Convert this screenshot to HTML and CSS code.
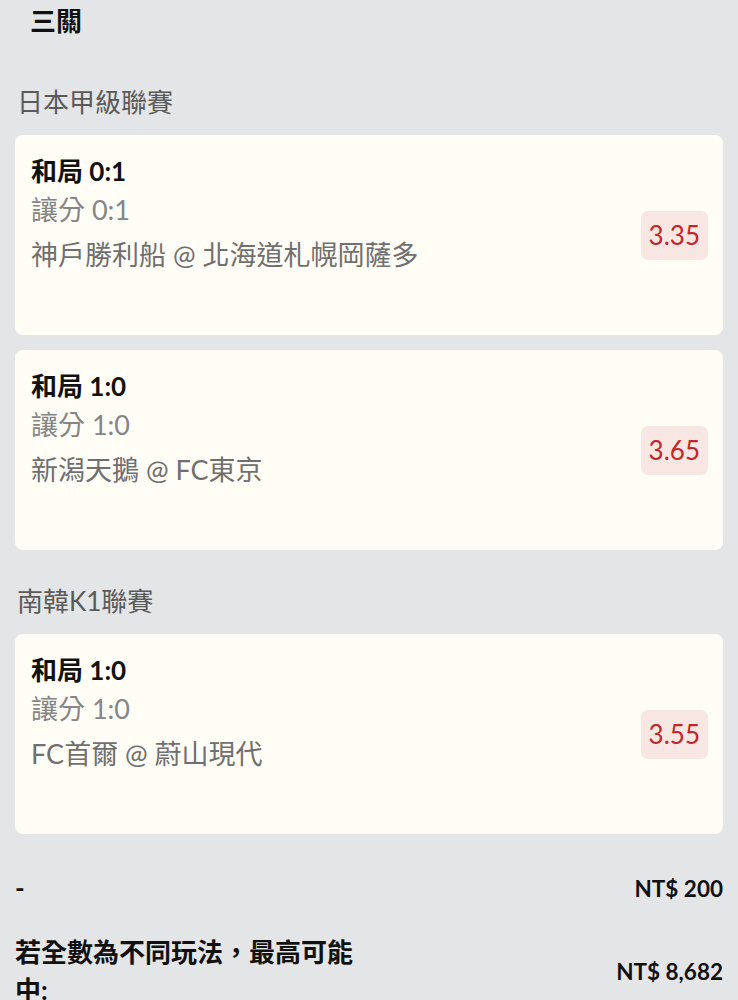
FILE: index.html
```html
<!DOCTYPE html>
<html lang="zh-Hant">
<head>
  <meta charset="UTF-8" />
  <meta name="viewport" content="width=device-width, initial-scale=1.0" />
  <title>三關</title>
  <link rel="stylesheet" href="styles.css">
</head>
<body>
  <h1 class="slip-title">三關</h1>

  <div class="league">日本甲級聯賽</div>

  <div class="bet-card">
    <div class="bet-info">
      <div class="bet-pick">和局 0:1</div>
      <div class="bet-market">讓分 0:1</div>
      <div class="bet-match">神戶勝利船 @ 北海道札幌岡薩多</div>
    </div>
    <div class="odds">3.35</div>
  </div>

  <div class="bet-card">
    <div class="bet-info">
      <div class="bet-pick">和局 1:0</div>
      <div class="bet-market">讓分 1:0</div>
      <div class="bet-match">新潟天鵝 @ FC東京</div>
    </div>
    <div class="odds">3.65</div>
  </div>

  <div class="league">南韓K1聯賽</div>

  <div class="bet-card">
    <div class="bet-info">
      <div class="bet-pick">和局 1:0</div>
      <div class="bet-market">讓分 1:0</div>
      <div class="bet-match">FC首爾 @ 蔚山現代</div>
    </div>
    <div class="odds">3.55</div>
  </div>

  <div class="summary-row stake">
    <div class="summary-label">-</div>
    <div class="summary-value">NT$ 200</div>
  </div>

  <div class="summary-row">
    <div class="summary-label wrap">若全數為不同玩法，最高可能中:</div>
    <div class="summary-value">NT$ 8,682</div>
  </div>
</body>
</html>
```

FILE: styles.css
```css
body {
  margin: 0;
  padding: 0 15px;
  background-color: #e4e5e7;
  font-family: Lato, 'Noto Sans CJK TC', sans-serif;
  color: #111;
}

.slip-title {
  margin: 0 0 47px;
  padding: 4px 15px 0;
  font-size: 26px;
  line-height: 34px;
  font-weight: 700;
}

.league {
  margin: 34px 2px 16px;
  font-size: 26px;
  line-height: 34px;
  color: #5a5a5a;
}

.bet-card {
  display: flex;
  align-items: center;
  justify-content: space-between;
  height: 200px;
  margin-bottom: 15px;
  padding: 0 15px 0 16px;
  box-sizing: border-box;
  background-color: #fffdf6;
  border-radius: 8px;
}

.bet-info {
  align-self: flex-start;
  padding-top: 19px;
}

.bet-pick {
  font-size: 26px;
  line-height: 34px;
  font-weight: 700;
  color: #111;
}

.bet-market {
  margin-top: 4px;
  font-size: 27px;
  line-height: 36px;
  color: #858585;
}

.bet-match {
  margin-top: 9px;
  font-size: 27px;
  line-height: 36px;
  color: #6f6f6f;
}

.odds {
  padding: 8px;
  background-color: #f7e6e1;
  border-radius: 7px;
  font-size: 26px;
  line-height: 33px;
  color: #c0272c;
}

.summary-row {
  display: flex;
  align-items: center;
  justify-content: space-between;
  margin-top: 26px;
}

.summary-row.stake {
  margin-top: 35px;
}

.summary-label {
  font-size: 26px;
  line-height: 38px;
  font-weight: 700;
}

.summary-label.wrap {
  max-width: 350px;
}

.summary-value {
  font-size: 22.5px;
  font-weight: 700;
}
```
